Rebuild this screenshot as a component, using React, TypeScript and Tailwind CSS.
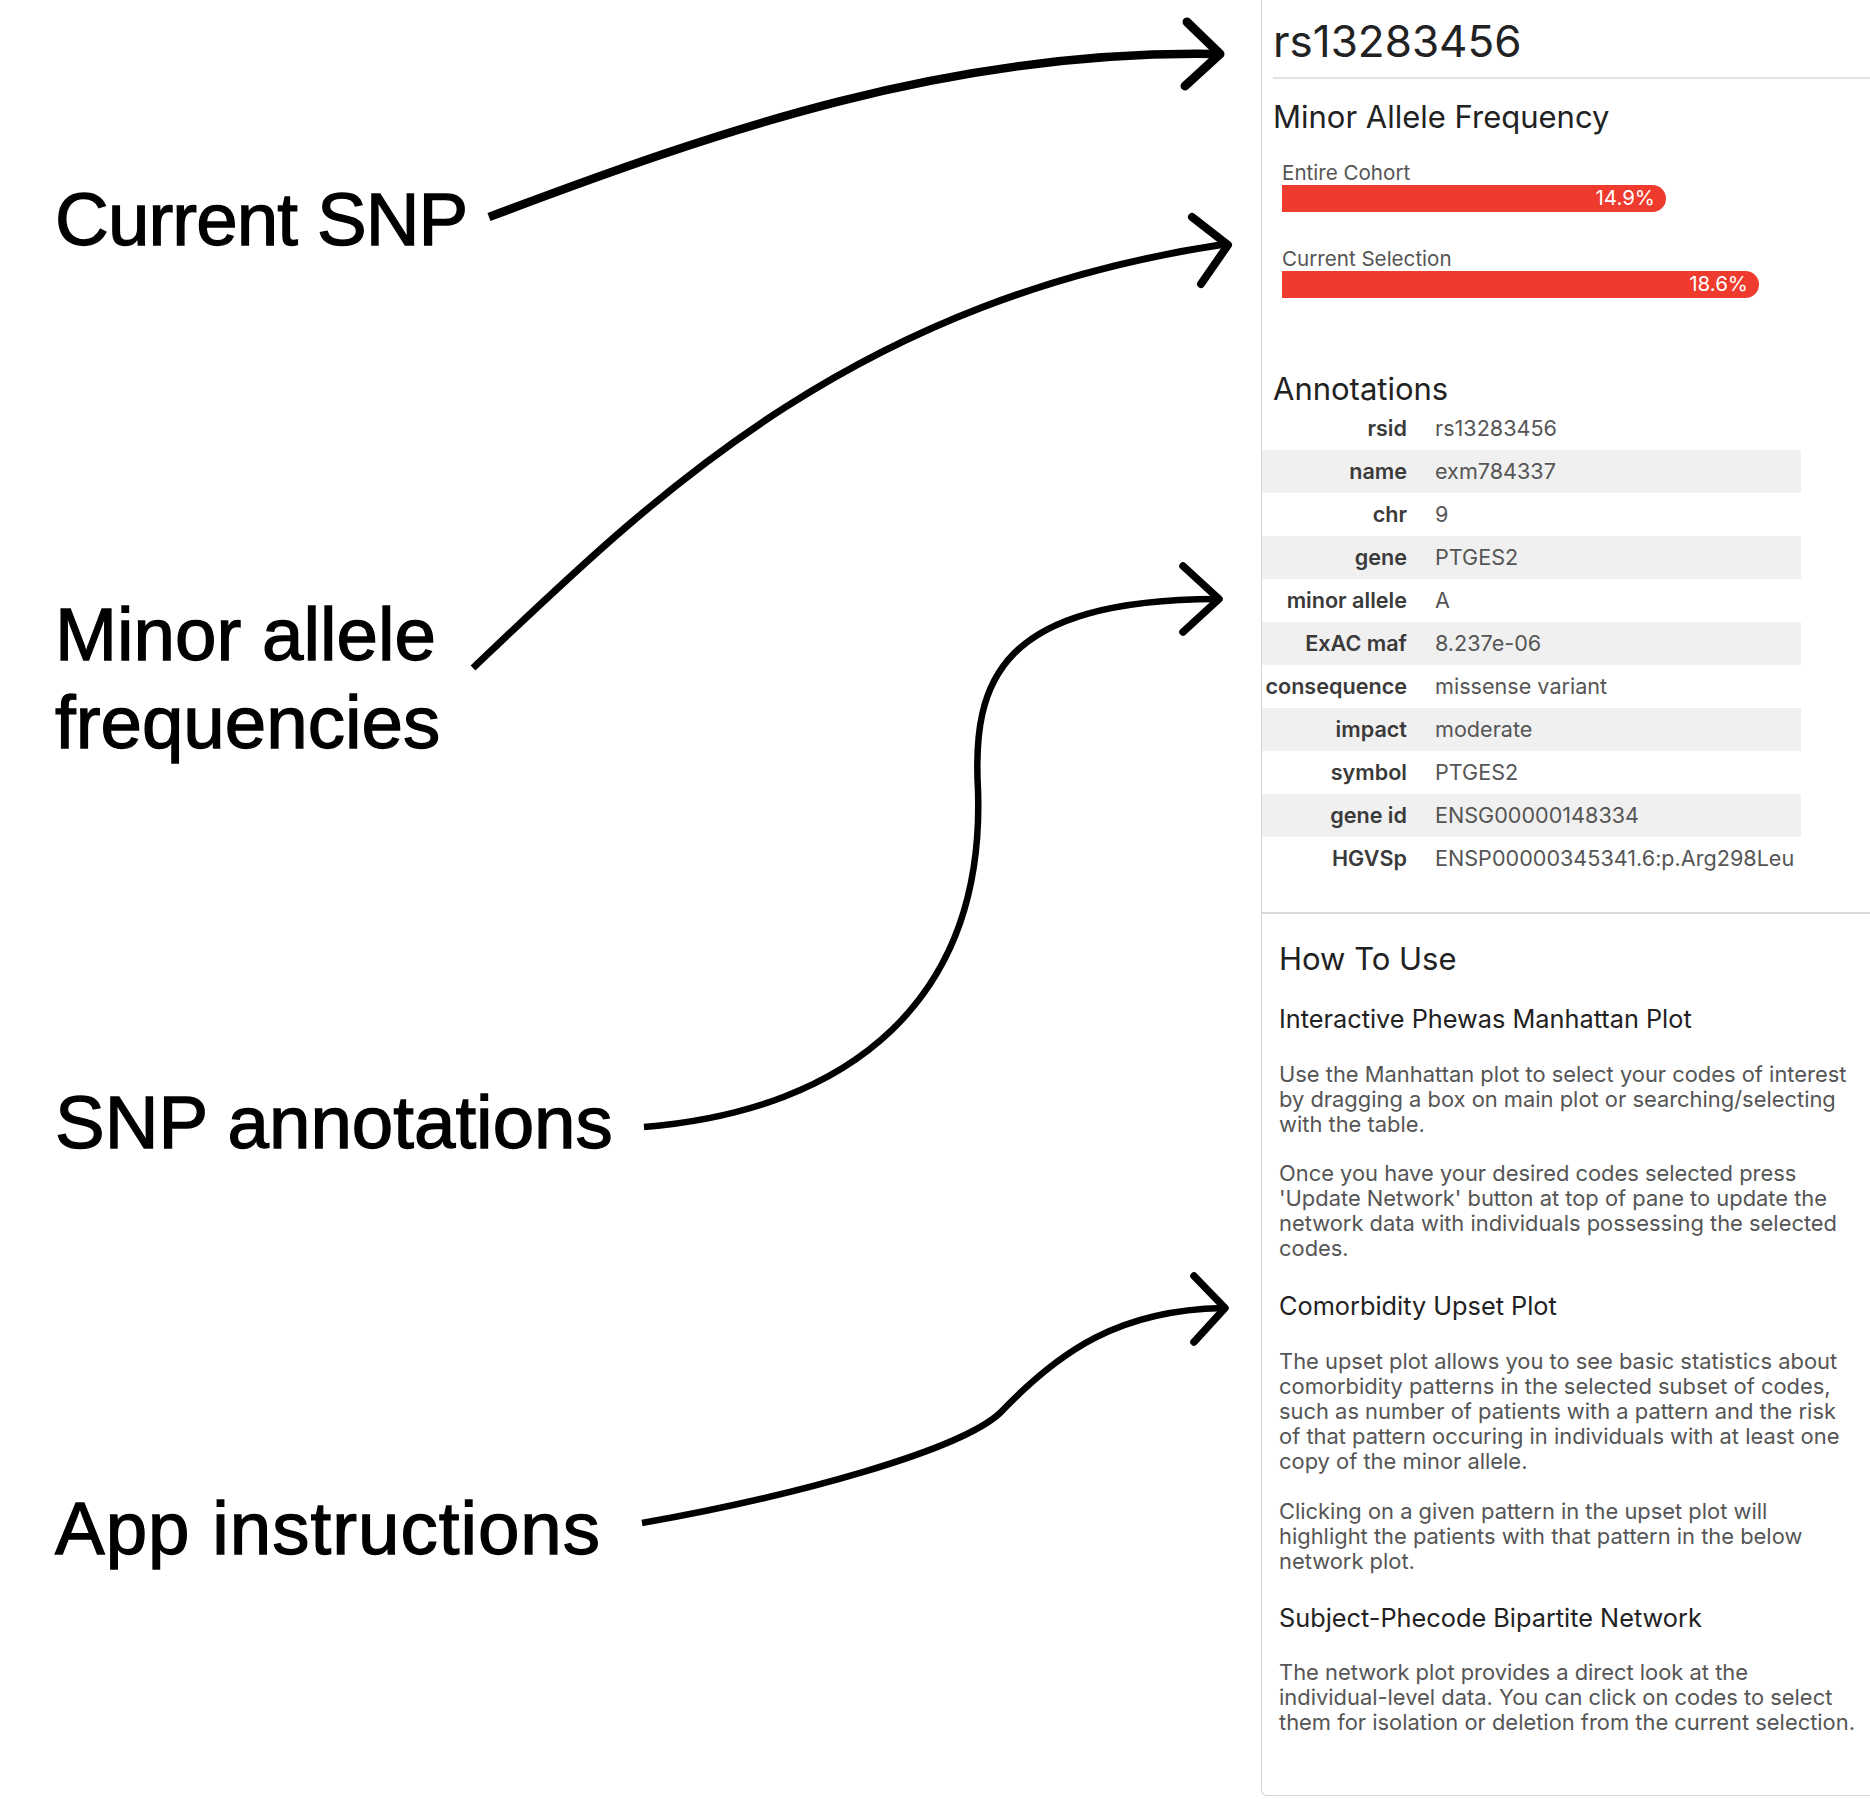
const annotations: [string, string][] = [
  ["rsid", "rs13283456"],
  ["name", "exm784337"],
  ["chr", "9"],
  ["gene", "PTGES2"],
  ["minor allele", "A"],
  ["ExAC maf", "8.237e-06"],
  ["consequence", "missense variant"],
  ["impact", "moderate"],
  ["symbol", "PTGES2"],
  ["gene id", "ENSG00000148334"],
  ["HGVSp", "ENSP00000345341.6:p.Arg298Leu"],
];

function Arrows() {
  return (
    <svg
      className="pointer-events-none absolute inset-0"
      width="1870"
      height="1799"
      viewBox="0 0 1870 1799"
      fill="none"
      stroke="black"
      strokeLinecap="round"
      strokeLinejoin="round"
    >
      {/* current snp */}
      <path d="M489 217 C 720 130, 950 50, 1215 54" strokeWidth="8.5" strokeLinecap="butt" />
      <path d="M1187 22 L1220 54 L1185 86" strokeWidth="9" />
      {/* minor allele */}
      <path d="M473 668 C 650 500, 850 300, 1226 244" strokeWidth="7" strokeLinecap="butt" />
      <path d="M1192 217 L1228 245 L1201 284" strokeWidth="8" />
      {/* annotations */}
      <path
        d="M644 1127 C 850 1110, 985 1000, 978 790 C 972 680, 1000 600, 1217 599"
        strokeWidth="6.5"
        strokeLinecap="butt"
      />
      <path d="M1183 566 L1219 599 L1183 632" strokeWidth="7.5" />
      {/* instructions */}
      <path
        d="M642 1523 C 800 1495, 960 1450, 1000 1413 C 1060 1350, 1120 1310, 1223 1308"
        strokeWidth="6.5"
        strokeLinecap="butt"
      />
      <path d="M1194 1276 L1225 1308 L1194 1342" strokeWidth="7.5" />
    </svg>
  );
}

function Bar({ label, value, width }: { label: string; value: string; width: number }) {
  return (
    <div>
      <div className="text-[20.6px] leading-[24px] text-[#555]">{label}</div>
      <div
        className="flex h-[27px] items-center justify-end rounded-r-full bg-[#ee3b2d] pr-[11px] text-[20.5px] text-white"
        style={{ width }}
      >
        {value}
      </div>
    </div>
  );
}

export default function App() {
  return (
    <div className="relative flex min-h-[1799px] w-[1870px] bg-white font-['Inter',sans-serif]">
      <div className="w-[1261px] shrink-0 pl-[55px] pt-[176px] font-['Liberation_Sans',Arial,sans-serif] text-[74.5px] leading-[88px] text-black [-webkit-text-stroke:1.3px_black]">
        <div className="tracking-[-0.9px]">Current SNP</div>
        <div className="mt-[327px]">
          Minor allele
          <br />
          frequencies
        </div>
        <div className="mt-[312px]">SNP annotations</div>
        <div className="mt-[318px] tracking-[1px]">App instructions</div>
      </div>

      <div className="h-[1796px] w-[609px] shrink-0 rounded-bl-[6px] border-b border-l border-[#d6d6d6]">
        <div className="ml-[11px] border-b-2 border-[#e2e2e2] pb-[10px] pt-[15px] text-[44px] leading-[52px] text-[#222]">
          rs13283456
        </div>
        <div className="ml-[11px] mt-[20px] text-[31px] leading-[36px] text-[#222]">
          Minor Allele Frequency
        </div>
        <div className="pl-[20px]">
          <div className="mt-[26px]">
            <Bar label="Entire Cohort" value="14.9%" width={384} />
          </div>
          <div className="mt-[35px]">
            <Bar label="Current Selection" value="18.6%" width={477} />
          </div>
        </div>

        <div className="ml-[11px] mt-[73px] text-[31px] leading-[36px] text-[#222]">Annotations</div>
        <div className="w-[539px] text-[21.6px]">
          {annotations.map(([k, v], i) => (
            <div key={k} className={`flex h-[43px] items-center ${i % 2 === 1 ? "bg-[#f0f0f0]" : ""}`}>
              <div className="w-[150px] shrink-0 whitespace-nowrap pr-[5px] text-right font-semibold text-[#3a3a3a]">
                {k}
              </div>
              <div className="whitespace-nowrap pl-[23px] text-[#555]">{v}</div>
            </div>
          ))}
        </div>

        <div className="mt-[32px] border-t-2 border-[#dadada] pl-[17px] pr-[11px]">
          <h3 className="mt-[27px] text-[31px] leading-[36px] text-[#222]">How To Use</h3>
          <h4 className="mt-[27px] mb-[28px] text-[25.3px] leading-[30px] text-[#222]">
            Interactive Phewas Manhattan Plot
          </h4>
          <div className="text-[21.9px] leading-[25px] text-[#555]">
            <p className="mb-[24px]">
              Use the Manhattan plot to select your codes of interest by dragging a box on main plot or
              searching/selecting with the table.
            </p>
            <p className="mb-[30px]">
              Once you have your desired codes selected press 'Update Network' button at top of pane to update
              the network data with individuals possessing the selected codes.
            </p>
          </div>
          <h4 className="mb-[28px] text-[25.3px] leading-[30px] text-[#222]">Comorbidity Upset Plot</h4>
          <div className="text-[21.9px] leading-[25px] text-[#555]">
            <p className="mb-[25px]">
              The upset plot allows you to see basic statistics about comorbidity patterns in the selected
              subset of codes, such as number of patients with a pattern and the risk of that pattern occuring
              in individuals with at least one copy of the minor allele.
            </p>
            <p className="mb-[29px]">
              Clicking on a given pattern in the upset plot will highlight the patients with that pattern in
              the below network plot.
            </p>
          </div>
          <h4 className="mb-[27px] text-[25.3px] leading-[30px] text-[#222]">
            Subject-Phecode Bipartite Network
          </h4>
          <p className="text-[21.9px] leading-[25px] text-[#555]">
            The network plot provides a direct look at the individual-level data. You can click on codes to
            select them for isolation or deletion from the current selection.
          </p>
        </div>
      </div>

      <Arrows />
    </div>
  );
}
